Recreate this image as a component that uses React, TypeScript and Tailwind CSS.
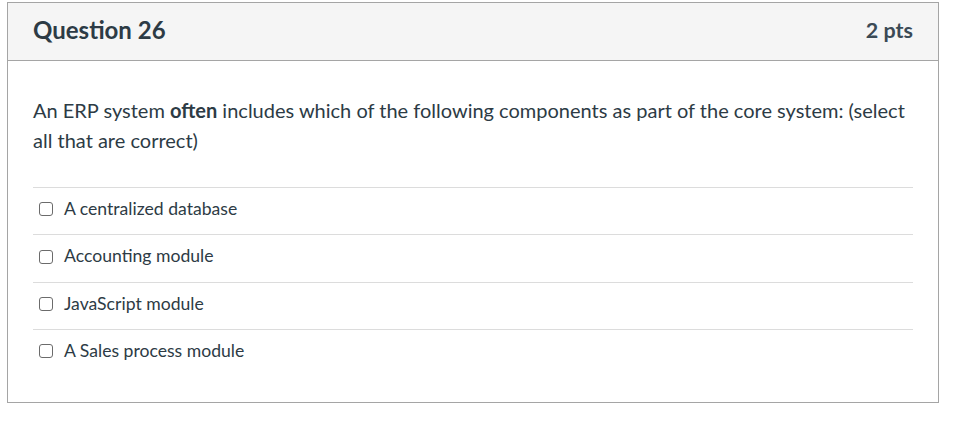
const answers = [
  'A centralized database',
  'Accounting module',
  'JavaScript module',
  'A Sales process module',
]

export default function App() {
  return (
    <div className="min-h-screen bg-white pt-[2px] pl-[7px] font-['Lato','Noto_Sans',sans-serif] text-[#2d3b45]">
      <div className="w-[932px] h-[401px] border border-[#a5a5a5] bg-white">
        <div className="h-[58px] bg-[#f5f5f5] border-b border-[#a5a5a5] px-[25px] pb-[3px] flex items-center justify-between">
          <h2 className="text-[24px] font-bold">Question 26</h2>
          <span className="text-[21.5px] font-bold text-[#3b4a55]">2 pts</span>
        </div>
        <div className="px-[25px] pt-[34px]">
          <p className="text-[20px] leading-[30px]">
            An ERP system <strong className="font-bold">often</strong> includes which of the following components as part of the core system: (select all that are correct)
          </p>
          <div className="mt-[32px]">
            {answers.map((a) => (
              <label
                key={a}
                className="h-[47.4px] border-t border-[#dcdcdc] flex items-center gap-[11px] pl-[6px] pb-[4px] text-[17.6px]"
              >
                <span className="w-[14px] h-[14px] rounded-[3px] border-[1.5px] border-[#6b6b6b] bg-white shrink-0" />
                <span>{a}</span>
              </label>
            ))}
          </div>
        </div>
      </div>
    </div>
  )
}
